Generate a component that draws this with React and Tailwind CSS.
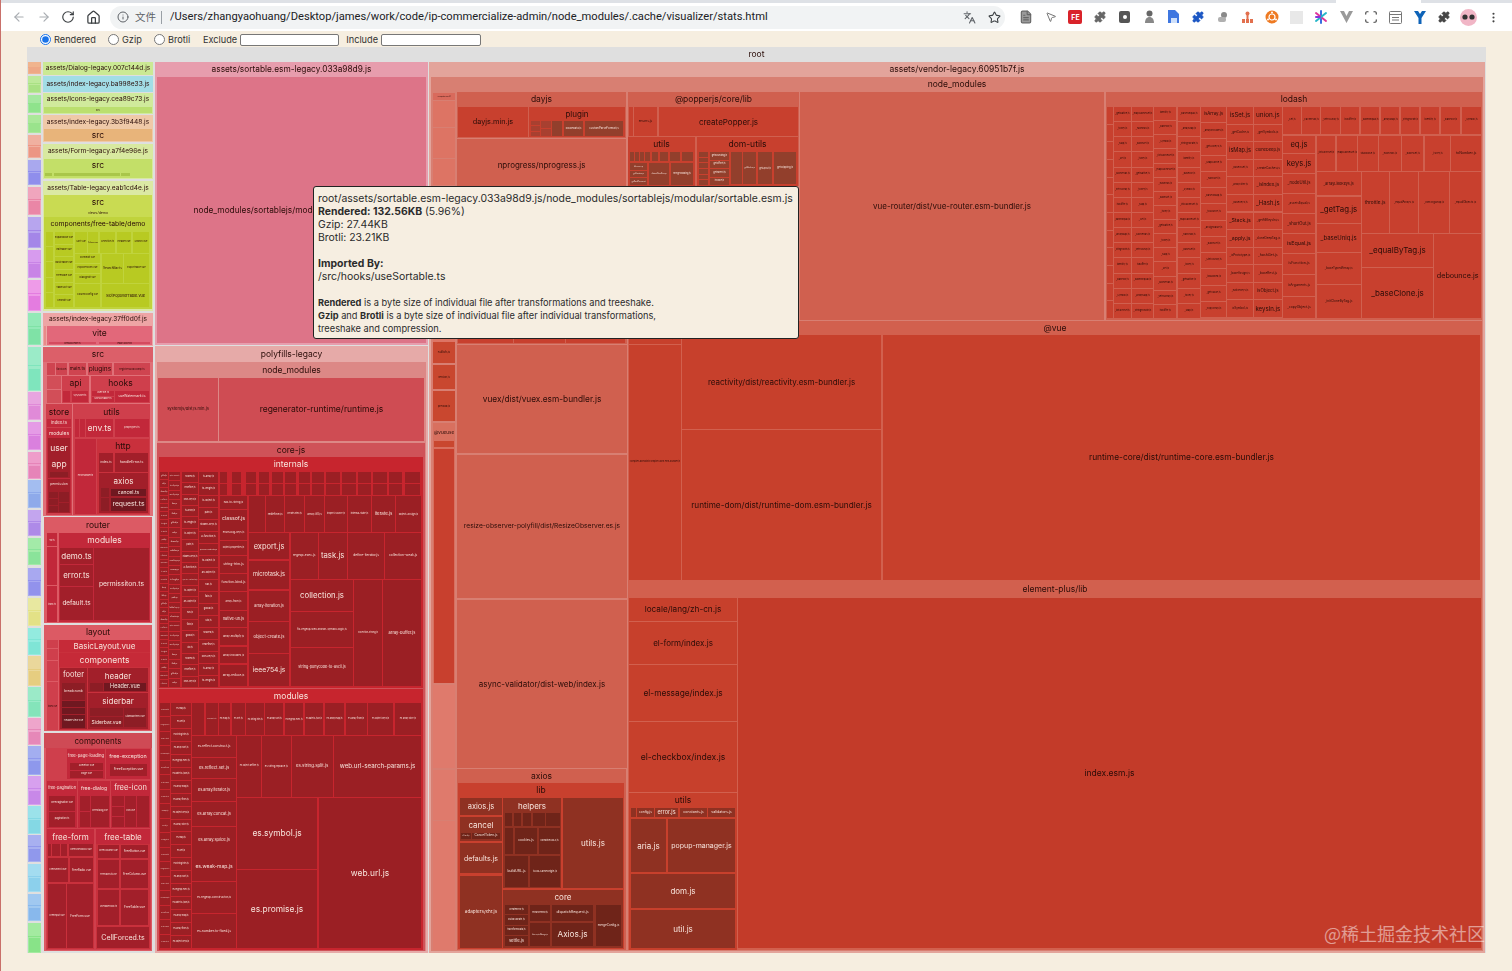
import React from "react";
import { ArrowLeft, ArrowRight, RotateCw, Home, Info, Languages, Star, Puzzle, MoreVertical, MousePointer2, Scan, FileText } from "lucide-react";

const T = [];
const n = (x0, y0, x1, y1, c, l, fs, tc) => {
  let size = fs || 8.5;
  if (l) {
    const w = x1 - x0 - 1;
    const h = y1 - y0;
    size = Math.min(size, w / (0.5 * l.length), h > 1 ? h : 1);
  }
  T.push({ x0, y0, x1, y1, c, l, fs: size, tc });
};
const LOD = ["_baseGet.js","_isKey.js","_getNative.js","_toKey.js","_Map.js","_Set.js","_cacheHas.js","_setToArray.js","isBuffer.js","_baseIsEqual.js","_arrayMap.js","_stringToPath.js","identity.js","_baseFor.js","_Symbol.js","_listCacheSet.js","_mapCacheGet.js","_hashHas.js"];
const CORE = ["to-object.js","an-object.js","has.js","fails.js","global.js","uid.js","shared.js","redefine.js","own-keys.js","is-array.js","to-length.js","is-object.js","path.js","hidden-keys.js","a-function.js","species-constructor.js"];
const ES = ["es.array.map.js","es.array.from.js","es.object.keys.js","es.array.slice.js","es.map.js","es.set.js","es.string.trim.js","es.array.sort.js","es.regexp.exec.js","es.date.to-json.js"];
let li = 0;
const cyc = (a) => a[li++ % a.length];
const col = (x0, x1, y0, y1, rows, c, names, fs) => { const h = (y1 - y0 + 1) / rows; for (let i = 0; i < rows; i++) n(x0, y0 + i * h, x1, y0 + (i + 1) * h - 1, c, names ? cyc(names) : "", fs || 3); };
const row = (y0, y1, xs, c, labels, fs) => xs.forEach(([a, b], i) => n(a, y0, b, y1, c, labels ? labels[i] : "", fs || 3));

/* root */
n(27, 47, 1486, 953, "#dfdfdf");
n(27, 47, 1486, 62, "#dfdfdf", "root", 8.5);

/* far-left chunks */
[[62,74,"#f0b48e","#eea886"],[76,93,"#bde99a","#a9e184"],[95,113,"#a5e8a0","#8fe38c"],[115,133,"#abe89a","#9ae38c"],[135,158,"#f0b0a0","#ec9684"],[160,185,"#a9a8ee","#8f8eec"],[187,215,"#f0a5bd","#ea86a6"],[217,248,"#b7a5ee","#a486e8"],[250,278,"#d79bee","#c884e6"],[280,311,"#ee9be8","#e47ce0"],[313,345,"#93e9b7","#7fe2a6"],[347,391,"#9bebc8","#7fe5bd"],[392,420,"#e8a5e0","#e08ad8"],[422,450,"#e59be6","#da80de"],[452,479,"#ee9dca","#e684b8"],[480,508,"#a3bdf0","#8eaaea"],[510,536,"#c3a5ee","#ae8ae8"],[538,565,"#a3eaa8","#8ae39a"],[568,596,"#a8a8f0","#9292ec"],[598,626,"#e8e8a0","#e3e186"],[628,655,"#93ebdf","#7fe5d6"],[656,686,"#ead79b","#e6cd80"],[687,717,"#9beac8","#84e4ba"],[718,745,"#eea5cb","#e688b8"],[746,775,"#a3aef0","#8e98ec"],[776,805,"#d7a0ee","#c888e8"],[806,834,"#9be2ea","#84d8e4"],[835,862,"#a8b0f0","#9098ec"],[864,892,"#a3dcf0","#8cd0ec"],[894,921,"#a0c8f0","#88b8ec"],[923,953,"#a3eaa0","#88e388"]].forEach(([a, b, l, d]) => {
  n(28, a, 41, b, l);
  n(28, a + (b - a) * 0.42, 41, a + (b - a) * 0.44, d);
  n(29, a + (b - a) * 0.5, 40, b - 1, d);
});

/* second column */
n(43, 62, 153, 75, "#cbe994", "assets/Dialog-legacy.007c144d.js", 6.6);
n(43, 76, 153, 92, "#a2dde6", "assets/index-legacy.ba998e33.js", 6.6);
n(43, 93, 153, 114, "#d0ea9c"); n(43, 93, 153, 106, "#d0ea9c", "assets/Icons-legacy.cea89c73.js", 6.6); n(44, 107, 152, 113, "#bbdf6e", "src", 3);
n(43, 115, 153, 142, "#efc9a8"); n(43, 115, 153, 129, "#efc9a8", "assets/index-legacy.3b3f9448.js", 6.6); n(44, 129, 152, 141, "#e8b47a", "src", 8.5);
n(43, 144, 153, 179, "#d8e9a0"); n(43, 144, 153, 158, "#d8e9a0", "assets/Form-legacy.a7f4e96e.js", 6.6); n(44, 159, 152, 178, "#c3df68"); n(44, 159, 152, 172, "#c3df68", "src", 8.5); row(173, 176, [[45,52],[54,120],[121,130]], "#a9c64a", ["", "", ""], 2.5);
n(43, 181, 153, 311, "#dbe9a4"); n(43, 181, 153, 195, "#dbe9a4", "assets/Table-legacy.eab1cd4e.js", 6.6);
n(44, 195, 152, 309, "#c9db52"); n(44, 195, 152, 210, "#c9db52", "src", 8.5); n(44, 210, 152, 217, "#c9db52", "views/demo", 3.5);
n(44, 217, 152, 309, "#c0d33c"); n(44, 217, 152, 232, "#c0d33c", "components/free-table/demo", 6.8);
const OL = "#b8ca22";
col(46, 53, 232, 307, 5, OL, [""]);
col(55, 73, 232, 307, 6, OL, ["EditTable.vue","BasicTable.vue","TreeTable.vue","TableSlot.vue","CellEdit.vue","ExpandRow.vue"], 2.4);
row(232, 253, [[75,87],[88,98],[100,115],[117,131],[133,149]], OL, ["Sort.vue","Column.vue","Selection.ts","Header.vue","Search.vue"], 2.4);
col(75, 100, 254, 283, 3, OL, ["PopoverForm.vue","DialogEdit.vue","FormEdit.vue"], 2.4);
n(75, 284, 100, 307, OL, "ColumnConfig.vue", 2.4);
n(102, 254, 123, 283, OL, "SearchBar.ts", 3.2); n(124, 254, 149, 283, OL, "ExportTable.vue", 2.4);
n(102, 284, 149, 307, OL, "SlotPopoverTable.vue", 3.8);

/* index 37ff + vite */
n(43, 313, 153, 346, "#eea5a5"); n(43, 313, 153, 326, "#eea5a5", "assets/index-legacy.37ff0d0f.js", 6.6);
n(44, 326, 46, 345, "#e88a8a"); n(47, 326, 152, 345, "#e2687a"); n(47, 326, 152, 341, "#e2687a", "vite", 8.5);
row(342, 344, [[49,96],[99,150]], "#d44b5f", ["preload-helper.js","legacy-polyfills"], 2);

/* src */
const S0 = "#dc5f69", S1 = "#cf3f4c", S2 = "#c2283a", S3 = "#a21f2a", S4 = "#8d1d25";
n(43, 347, 153, 516, "#e07078"); n(43, 347, 153, 362, S0, "src", 8.5);
n(47, 363, 55, 375, "#cf4450"); n(56, 363, 67, 375, "#cf4450", "favicon", 3); n(69, 363, 86, 375, "#cf4450", "main.ts", 5); n(88, 363, 112, 375, "#cf4450", "plugins", 7); n(114, 363, 150, 375, "#cf4450", "registerGlobComp.ts", 2.6);
n(47, 376, 61, 389, "#d24e58"); n(47, 390, 61, 403, "#d24e58");
n(62, 376, 89, 403, S1); n(62, 376, 89, 390, S1, "api", 8.5); n(63, 391, 70, 402, S2); n(72, 391, 88, 402, S2, "sys/user.ts", 2.5);
n(91, 376, 150, 403, S1); n(91, 376, 150, 390, S1, "hooks", 8.5); col(92, 114, 391, 402, 2, S2, ["useTitle.ts","useSortable.ts"], 2.5); n(115, 391, 149, 402, S2, "useWatermark.ts", 3.4);

n(46, 404, 72, 515, S1);
n(46, 405, 72, 419, S1, "store", 8.5);
n(47, 419, 71, 427, S2, "index.ts", 4.3);
n(47, 428, 71, 513, S2); n(47, 428, 71, 438, S2, "modules", 5);
n(48, 438, 70, 458, S3, "user", 8.5);
n(48, 458, 70, 478, S3); n(48, 458, 70, 471, S3, "app", 8.5); n(50, 472, 68, 477, S4);
n(48, 479, 70, 513, S3); n(48, 479, 70, 491, S3, "permission", 3.4); col(49, 58, 492, 512, 3, S4); col(59, 69, 492, 512, 2, S4);

n(73, 404, 150, 515, S1); n(73, 405, 150, 419, S1, "utils", 8.5);
row(419, 437, [[75,79],[80,85]], S2); n(86, 419, 113, 437, S2, "env.ts", 8.5); n(115, 419, 149, 437, S2, "propTypes.ts", 2.5);
n(75, 439, 96, 514, S2, "errorHandler.ts", 2.2);
n(97, 439, 149, 514, "#c9303c"); n(97, 440, 149, 453, "#c9303c", "http", 8.5);
n(99, 453, 113, 472, S3, "index.ts", 3); n(115, 453, 148, 472, S3, "handleError.ts", 3.6);
n(99, 473, 148, 513, S3); n(99, 474, 148, 487, S3, "axios", 8);
n(101, 488, 109, 497, S4); n(101, 498, 109, 511, S4);
n(111, 489, 146, 496, "#701820", "cancel.ts", 5); n(111, 498, 146, 511, "#701820", "request.ts", 7);

/* router */
n(44, 517, 152, 623, "#dc5a64"); n(44, 518, 152, 532, "#dc5a64", "router", 8.5);
n(47, 533, 57, 546, S2, "ssr.ts", 2); n(47, 547, 57, 585, S2); n(47, 586, 57, 622, S2, "index.ts", 2);
n(59, 533, 150, 622, S2); n(59, 533, 150, 547, S2, "modules", 8.5);
n(60, 548, 93, 564, S3, "demo.ts", 8); n(60, 565, 93, 586, S3, "error.ts", 7.8); n(60, 587, 93, 620, S3, "default.ts", 6.6);
n(94, 548, 149, 620, S3, "permissiton.ts", 6.8);

/* layout */
n(44, 625, 152, 731, "#dc5a64"); n(44, 625, 152, 640, "#dc5a64", "layout", 8.5);
n(47, 640, 58, 648, S1); n(47, 649, 58, 660, S1); n(47, 661, 58, 681, S1); n(47, 682, 58, 730, S1, "index.vue", 2);
n(59, 640, 150, 730, "#c9303c");
n(59, 640, 150, 652, "#c62a38", "BasicLayout.vue", 8);
n(59, 653, 150, 667, "#c62a38", "components", 8.5);
n(60, 668, 87, 729, S3); n(60, 668, 87, 682, S3, "footer", 7.5);
n(62, 683, 85, 700, S4, "breadcrumb", 3.2); n(62, 701, 85, 707, "#701820"); n(62, 708, 85, 714, "#701820"); n(62, 715, 85, 728, "#701820", "HeaderView.vue", 2.5);
n(88, 668, 148, 692, S3); n(88, 668, 148, 683, S3, "header", 8);
n(90, 683, 103, 691, S4); n(104, 683, 146, 691, "#701820", "Header.vue", 5.5);
n(88, 693, 148, 729, S3); n(88, 693, 148, 708, S3, "siderbar", 8);
n(90, 708, 123, 716, S4); n(90, 717, 123, 727, S4, "Siderbar.vue", 5); n(124, 708, 146, 727, S4, "SidebarItem.vue", 2.5);

/* components */
n(44, 733, 152, 951, "#dc5a64"); n(44, 733, 152, 748, "#cf4a55", "components", 8);
n(46, 748, 151, 950, S1);
n(47, 749, 53, 779, S1); n(54, 749, 65, 779, S1);
n(67, 749, 105, 779, S2); n(67, 750, 105, 762, S2, "free-page-loading", 4.2); col(70, 103, 763, 778, 2, S3, ["Skeleton.vue","Page.vue"], 2.5);
n(106, 749, 150, 779, S2); n(106, 750, 150, 763, S2, "free-exception", 5.4); n(110, 764, 147, 776, S3, "FreeException.vue", 3.4);
n(47, 781, 77, 828, S2); n(47, 781, 77, 795, S2, "free-pagination", 3.8); col(49, 75, 796, 827, 2, S3, ["FreePagination.vue","pagination.ts"], 2.4);
n(78, 781, 110, 828, S2); n(78, 781, 110, 795, S2, "free-dialog", 5); n(80, 796, 90, 811, S3); n(80, 812, 90, 827, S3); n(91, 796, 109, 827, S3, "FreeDialog.vue", 2.2);
n(111, 781, 150, 828, S2); n(111, 781, 150, 795, S2, "free-icon", 7.5); col(112, 124, 796, 827, 3, S3); n(125, 796, 136, 827, S3, "Icon.vue", 2.2); n(137, 796, 149, 827, S3);
n(47, 829, 94, 949, "#c9303c"); n(47, 829, 94, 844, S2, "free-form", 8);
row(844, 856, [[48,51],[52,60],[61,67]], S3); n(69, 844, 93, 856, S3, "FreeCheckbox.vue", 2.4);
n(48, 858, 68, 882, S3, "FreeSelect.vue", 2.4); n(70, 858, 93, 882, S3, "FreeRadio.vue", 2.8);
n(48, 884, 66, 948, S3, "FreeInput.vue", 2.3); n(67, 884, 93, 948, S3, "FreeForm.vue", 3);
n(96, 829, 150, 949, "#c9303c"); n(96, 829, 150, 844, S2, "free-table", 8);
n(98, 845, 119, 858, S3, "FreeColumn.vue", 2.4); n(121, 845, 148, 858, S3, "FreeButton.vue", 3);
n(98, 860, 119, 888, S3, "FreeTableUtil.vue", 2); n(121, 860, 148, 888, S3, "FreeColumn.vue", 3);
n(98, 890, 119, 925, S3, "useTableHook.ts", 2.2); n(121, 890, 148, 925, S3, "FreeTable.vue", 3.2);
n(97, 927, 149, 948, S3, "CellForced.ts", 7);

/* sortable */
n(155, 62, 428, 345, "#e79dad"); n(155, 62, 428, 77, "#e79dad", "assets/sortable.esm-legacy.033a98d9.js", 8.3);
n(157, 77, 426, 343, "#dd7488", "node_modules/sortablejs/modular/sortable.esm.js", 8.3);

/* polyfills */
n(155, 346, 428, 953, "#e6aaa8"); n(155, 346, 428, 362, "#e6aaa8", "polyfills-legacy", 8.5);
n(157, 362, 426, 951, "#dc8886"); n(157, 362, 426, 378, "#dc8886", "node_modules", 8.5);
n(158, 378, 218, 441, "#cf4c53", "systemjs/dist/s.min.js", 4.1);
n(219, 378, 424, 441, "#cf4c53", "regenerator-runtime/runtime.js", 8.5);
n(157, 443, 425, 951, "#cf5258"); n(157, 443, 425, 457, "#cf5258", "core-js", 8.5);
const R0 = "#c7252e", R1 = "#9b1f24";
n(159, 457, 423, 688, R0); n(159, 457, 423, 472, R0, "internals", 8.5);
const px = (o, s) => o + s / 3;
col(160, 168, 472, 687, 27, R1, CORE, 1.5);
col(169, 180, 472, 687, 23, R1, CORE, 1.8);
col(182, 198, 472, 687, 19, R1, CORE, 2.2);
col(199, 218, 472, 687, 18, R1, CORE, 2.4);
[[195,220],[232,262],[273,305],[312,344],[350,387],[391,427],[431,467],[471,510],[514,557],[561,605],[609,650],[654,698],[702,745],[750,798]].forEach(([a,b],i)=>{ n(px(155,a),472,px(155,b)-1,483,R1); n(px(155,a),484,px(155,b)-1,495,R1); });
[[168,208,"has-to-string.js",2.7],[210,260,"classof.js",5.6],[262,300,"enum-bug-keys.js",2.5],[303,345,"object-properties.js",2.3],[348,400,"string-trim.js",3.4],[402,452,"function-bind.js",3.2],[455,510,"array-from.js",2.6],[512,560,"native-url.js",3.8],[565,615,"array-multiply.js",2.8],[620,670,"array-includes.js",2.7],[675,738,"array-reduce.js",3]].forEach(([a,b,l,f])=>n(220,px(440,a),247,px(440,b),R1,l,f));
[[282,330,"",2.5],[333,388,"redefine.js",3],[391,446,"create-html.js",2.2],[449,508,"array-fill.js",2.9],[511,575,"inspect-source.js",2.2],[579,648,"internal-state.js",2.4],[651,720,"iterate.js",4.8],[723,798,"object-assign.js",2.6]].forEach(([a,b,l,f])=>n(px(155,a),496,px(155,b),532,R1,l,f));
[[280,358,"export.js",7.5],[362,448,"microtask.js",5.6],[452,542,"array-iteration.js",3.8],[546,638,"object-create.js",4.2],[642,738,"ieee754.js",6.8]].forEach(([a,b,l,f])=>n(249,px(440,a),289,px(440,b),R1,l,f));
[[407,488,"regexp-exec.js",3.2],[491,575,"task.js",7.8],[579,688,"define-iterator.js",3.3],[691,798,"collection-weak.js",3.3]].forEach(([a,b,l,f])=>n(px(155,a),533,px(155,b),579,R1,l,f));
n(291,580,353,611,R1,"collection.js",7.8); n(291,612,353,647,R1,"fix-regexp-well-known-symbol-logic.js",2.7); n(291,648,353,686,R1,"string-punycode-to-ascii.js",3.7);
n(354,580,382,686,R1,"collection-strong.js",2.2); n(383,580,421,686,R1,"array-buffer.js",4);

n(159, 689, 423, 950, R0); n(159, 689, 423, 703, R0, "modules", 8.5);
col(160, 170, 703, 948, 17, R1, ES, 1.4);
col(171, 191, 703, 948, 19, R1, ES, 2.1);
[[112,148],[152,188],[192,226],[230,270],[273,328],[331,385],[389,445],[449,505],[509,568],[572,635],[639,715],[719,798]].forEach(([a,b],i)=>n(px(155,a),703,px(155,b),735,R1,i<1?"":cyc(ES),2.2));
[[138,200,"es.reflect.construct.js",3.2],[203,265,"es.reflect.set.js",4.2],[268,332,"es.array.iterator.js",3.8],[335,408,"es.array.concat.js",4],[410,488,"es.array.splice.js",4],[490,572,"es.weak-map.js",5],[575,670,"es.regexp.constructor.js",3],[673,775,"es.number.to-fixed.js",3.4]].forEach(([a,b,l,f])=>n(192,px(690,a),236,px(690,b),R1,l,f));
[[247,318,"es.object.define.js",2.2],[321,407,"es.string.replace.js",2.6],[410,533,"es.string.split.js",4.4],[537,798,"web.url-search-params.js",6.2]].forEach(([a,b,l,f])=>n(px(155,a),736,px(155,b),797,R1,l,f));
n(237,798,317,869,R1,"es.symbol.js",8.4); n(237,870,317,948,R1,"es.promise.js",8.4); n(319,798,421,948,R1,"web.url.js",8.4);

/* vendor */
n(429, 62, 1485, 953, "#e3a49b"); n(429, 62, 1485, 77, "#e3a49b", "assets/vendor-legacy.60951b7f.js", 8.5);
n(431, 77, 1483, 951, "#d87f72"); n(431, 77, 1483, 92, "#d87f72", "node_modules", 8.5);
const L0 = "#df7a6c", L1 = "#d0604f", L2 = "#c8402e", L3 = "#923f2c", L4 = "#6f2419";
n(433, 93, 455, 100, "#d96a5c", "compute-scroll", 1.8);
[[101,127],[128,158],[159,185]].forEach(([a,b])=>n(433,a,455,b,"#dd7464"));
n(433, 186, 455, 344, "#dd7464");
n(433, 342, 455, 363, "#c9472f", "nullish.js", 3);
n(433, 365, 455, 389, "#c9472f", "version.js", 2.6);
n(433, 391, 455, 421, "#c9472f", "preload.js", 2.6);
n(433, 423, 455, 683, "#d8705f"); n(433, 426, 455, 440, "#d8705f", "@vueuse", 4.6); n(434, 441, 454, 447, "#c9472f"); n(434, 449, 454, 683, L2);
n(433, 685, 455, 768, L0); n(433, 770, 455, 820, L0); n(433, 821, 455, 950, L0);

n(457, 92, 626, 138, L1); n(457, 92, 626, 107, L1, "dayjs", 8.5);
n(458, 107, 528, 137, L2, "dayjs.min.js", 7.3);
n(529, 107, 625, 137, L2); n(529, 108, 625, 120, L2, "plugin", 8);
col(531, 540, 121, 136, 3, "#a84030"); col(541, 551, 121, 136, 2, "#a84030");
n(552, 121, 562, 136, L3); n(564, 121, 583, 136, L3, "localeData.js", 2.6); n(585, 121, 623, 136, L3, "customParseFormat.js", 2.8);
n(457, 139, 626, 191, L1, "nprogress/nprogress.js", 8);
n(457, 192, 627, 344, L1);
row(325, 343, [[458,513],[514,565],[566,625]], L2);
n(457, 345, 627, 453, L1, "vuex/dist/vuex.esm-bundler.js", 8.3);
n(457, 455, 627, 598, L1, "resize-observer-polyfill/dist/ResizeObserver.es.js", 6.7);
n(457, 600, 627, 768, L1, "async-validator/dist-web/index.js", 8);

n(457, 769, 626, 950, L1); n(457, 769, 626, 783, L1, "axios", 8.5);
n(458, 783, 624, 949, L2); n(458, 783, 624, 798, L2, "lib", 8.5);
const A = "#8f3122";
n(460, 798, 502, 815, A, "axios.js", 7.5);
n(460, 817, 502, 841, A); n(460, 817, 502, 833, A, "cancel", 8); n(461, 833, 471, 839, L4, "isCancel.js", 1.4); n(472, 833, 500, 839, L4, "CancelToken.js", 3.2);
n(460, 843, 502, 873, A, "defaults.js", 7);
n(460, 876, 502, 948, A, "adapters/xhr.js", 4.6);
n(503, 798, 561, 888, A); n(503, 799, 561, 812, A, "helpers", 8);
[[505,512],[514,521],[523,531],[533,545],[546,560]].forEach(([a,b])=>n(a,813,b,826,L4));
n(505, 828, 513, 854, L4); n(515, 828, 537, 854, L4, "cookies.js", 3.3); n(539, 828, 560, 854, L4, "combineURLs.js", 2.4);
n(505, 856, 528, 887, L4, "buildURL.js", 3.4); n(530, 856, 560, 887, L4, "isURLSameOrigin.js", 2.6);
n(563, 798, 623, 888, A, "utils.js", 8);
n(503, 890, 623, 948, A); n(503, 890, 623, 904, A, "core", 8);
col(505, 528, 905, 935, 3, L4, ["transformData.js","createError.js","buildFullPath.js"], 2.3); n(505, 936, 528, 946, L4, "settle.js", 4.2);
n(530, 905, 550, 921, L4, "enhanceError.js", 2.1); n(530, 923, 550, 946, L4, "InterceptorManager.js", 1.5);
n(552, 905, 593, 921, L4, "dispatchRequest.js", 3.6); n(552, 923, 593, 946, L4, "Axios.js", 8.2);
n(596, 905, 621, 946, L4, "mergeConfig.js", 3);

n(628, 92, 799, 186, L1); n(628, 92, 799, 107, L1, "@popperjs/core/lib", 8.5);
n(629, 107, 633, 136, L2); n(634, 107, 657, 136, L2, "enums.js", 3.2); n(659, 107, 798, 136, L2, "createPopper.js", 8);
n(628, 137, 695, 186, L2); n(628, 138, 695, 151, L2, "utils", 8.5);
[[630,634],[635,639],[640,644],[645,650],[652,658],[660,668],[670,680],[682,693]].forEach(([a,b])=>n(a,152,b,161,L3));
col(630, 647, 163, 185, 3, L3, ["getBasePlacement","debounce.js","getVariation.js"], 1.6); n(649, 163, 669, 185, L3, "detectOverflow.js", 1.8); n(671, 163, 693, 185, L3, "mergePadding.js", 2.2);
n(697, 137, 798, 186, L2); n(697, 138, 798, 151, L2, "dom-utils", 8.5);
col(699, 708, 152, 185, 6, L3); col(710, 729, 152, 185, 4, L3, ["getBounding.js","getOffset.js","getParent.js","isTable.js"], 2.2);
n(731, 152, 742, 184, L3); n(743, 152, 756, 184, L3, "getWindow.js", 1.7); n(758, 152, 772, 184, L3, "getLayout.js", 2); n(774, 152, 796, 184, L3, "getClipping.js", 2.5);

n(800, 92, 1104, 320, L1, "vue-router/dist/vue-router.esm-bundler.js", 8);

/* lodash */
n(1106, 92, 1482, 320, L1); n(1106, 92, 1482, 107, L1, "lodash", 8.5);
const D = "#c8402e", q = (v) => 1100 + v / 3, qy = (v) => 90 + v / 3;
col(q(22), q(38), 107, 318, 12, D);
[[42,92,14],[95,160,14],[163,229,15],[233,300,14]].forEach(([a,b,r])=>col(q(a),q(b),107,318,r,D,LOD,2.4));
const lodCol = (a, b, labels) => labels.forEach((l, i) => { const h = 211 / labels.length; const big = l[1]; n(q(a), 107 + i * h, q(b), 107 + (i + 1) * h - 1, D, l[0], big || 2.5); });
lodCol(303, 378, [["isArray.js",4.4],["_arrayIncludes.js"],["_getAllKeys.js"],["_MapCache.js"],["_hashSet.js"],["_baseIsMap.js"],["_toSource.js"],["_assignValue.js"],["_baseGet.js"],["_Uint8Array.js"],["_isMasked.js"],["_getValue.js"],["_copyArray.js"]]);
lodCol(382, 458, [["isSet.js",6],["_getCache.js",3],["isMap.js",5.6],["_baseIsSet.js"],["_arrayFilter.js"],["_baseKeys.js"],["_Stack.js",5.2],["_apply.js",5.2],["_isPrototype.js",3],["_baseAssign.js",2.8],["_nativeKeys.js"],["isSymbol.js",3]]);
lodCol(461, 546, [["union.js",6.4],["_getSymbols.js",3],["cloneDeep.js",4],["_createCaches.js",3],["_isIndex.js",4.6],["_Hash.js",6],["_getAllKeysIn.js",3],["_cloneDeepTag.js",3],["_hashGet.js",3.6],["_baseRest.js",3.2],["isObject.js",4.4],["keysIn.js",6.2]]);
[[549,602],[606,660],[664,720],[724,778],[783,838],[843,898],[903,958],[963,1018],[1023,1080],[1085,1143]].forEach(([a,b],i)=>n(q(a),qy(50),q(b),qy(133),D,cyc(LOD),2.5));
[[650,706],[710,770],[773,833],[837,902],[906,970],[975,1050],[1054,1143]].forEach(([a,b],i)=>n(q(a),qy(138),q(b),qy(243),D,i==2?"stubFalse.js":i==6?"toNumber.js":cyc(LOD),i==6?3.6:2.6));
[[138,190,"eq.js",7.6],[193,250,"keys.js",7.6],[253,308,"_nodeUtil.js",4.2],[311,370,"_assetsEqual.js",3],[373,430,"_shortOut.js",4.2],[433,490,"isEqual.js",5.4],[493,552,"isFunction.js",3.6],[555,618,"isArguments.js",3.2],[621,684,"_copyObject.js",3.4]].forEach(([a,b,l,f])=>n(q(549),qy(a),q(645),qy(b),D,l,f));
[[246,316,"_arrayLikeKeys.js",3.7],[320,400,"_getTag.js",7.8],[403,486,"_baseUniq.js",6],[490,582,"_baseTypedArray.js",3],[586,684,"_initCloneByTag.js",3.2]].forEach(([a,b,l,f])=>n(q(650),qy(a),q(782),qy(b),D,l,f));
[[785,866,"throttle.js",5],[870,954,"_equalArrays.js",2.8],[958,1046,"_overArgWrap.js",2.6],[1050,1143,"_equalObjects.js",2.8]].forEach(([a,b,l,f])=>n(q(a),qy(246),q(b),qy(428),D,l,f));
n(q(785),qy(431),q(1000),qy(530),D,"_equalByTag.js",8);
n(q(785),qy(534),q(1000),qy(684),D,"_baseClone.js",8);
n(q(1003),qy(431),q(1143),qy(684),D,"debounce.js",7.2);

/* @vue */
const V = "#c7402c";
n(628, 321, 1482, 582, "#d2604e"); n(628, 321, 1482, 335, "#d2604e", "@vue", 8.5);
n(629, 335, 681, 344, V, "shared/dist/shared.esm-bundler.js", 2.4);
n(629, 345, 681, 580, V, "compiler-dom/dist/compiler-dom.esm-bundler.js", 2.2);
n(682, 335, 881, 429, V, "reactivity/dist/reactivity.esm-bundler.js", 8);
n(682, 430, 881, 580, V, "runtime-dom/dist/runtime-dom.esm-bundler.js", 8.2);
n(883, 335, 1480, 580, V, "runtime-core/dist/runtime-core.esm-bundler.js", 8.4);

/* element-plus */
n(628, 582, 1482, 950, "#d2604e"); n(628, 582, 1482, 597, "#d2604e", "element-plus/lib", 8.5);
n(629, 598, 737, 621, V, "locale/lang/zh-cn.js", 8.2);
n(629, 622, 737, 664, V, "el-form/index.js", 8);
n(629, 665, 737, 721, V, "el-message/index.js", 8.3);
n(629, 722, 737, 792, V, "el-checkbox/index.js", 8.6);
n(629, 793, 737, 950, V); n(629, 794, 737, 807, V, "utils", 8.5);
const E = "#8f3122";
n(631, 808, 636, 817, E); n(637, 808, 654, 817, E, "config.js", 3.2); n(655, 808, 678, 817, E, "error.js", 6.4); n(680, 808, 707, 817, E, "constants.js", 3.6); n(708, 808, 735, 817, E, "validators.js", 3.6);
n(631, 819, 666, 872, E, "aria.js", 8); n(668, 819, 735, 872, E, "popup-manager.js", 7);
n(631, 874, 735, 908, E, "dom.js", 8); n(631, 910, 735, 948, E, "util.js", 8);
n(738, 598, 1481, 948, "#c33b29", "index.esm.js", 8.5);

const lum = (h) => { const v = parseInt(h.slice(1), 16); return 0.299 * (v >> 16) + 0.587 * ((v >> 8) & 255) + 0.114 * (v & 255); };

function Tile({ t }) {
  const dark = lum(t.c) < 95;
  return (
    <div
      className="absolute flex items-center justify-center overflow-hidden whitespace-nowrap leading-none"
      style={{ left: t.x0, top: t.y0 - 47, width: t.x1 - t.x0, height: t.y1 - t.y0, background: t.c, fontSize: t.fs, color: dark ? "#f8e4dc" : "#2a0c08" }}
    >
      {t.l}
    </div>
  );
}

function Ext({ children }) {
  return <div className="flex h-4 w-[24.6px] shrink-0 items-center justify-center">{children}</div>;
}

function Toolbar() {
  return (
    <div className="h-[31px] shrink-0 bg-white">
      <div className="flex h-[3px] bg-[#dee1e6]">
        <div className="ml-[1335px] h-[3px] w-[85px] bg-white" />
      </div>
      <div className="flex h-[28px] items-center font-['Inter',sans-serif]">
        <div className="ml-[11px] flex w-[98px] items-center gap-[10.5px]">
          <ArrowLeft size={14} className="text-[#a9adb2]" />
          <ArrowRight size={14} className="text-[#a9adb2]" />
          <RotateCw size={14} className="text-[#3c4043]" />
          <Home size={15} className="text-[#3c4043]" />
        </div>
        <div className="flex h-[23px] w-[895px] items-center rounded-full bg-[#f1f3f4] pl-[7px]">
          <Info size={12} className="text-[#5f6368]" />
          <span className="ml-[6px] font-['Noto_Sans_CJK_SC',sans-serif] text-[10.5px] text-[#5f6368]">文件</span>
          <span className="ml-[5px] h-[13px] w-px bg-[#9aa0a6]" />
          <span className="ml-[8px] font-['Roboto',sans-serif] text-[11.15px] text-[#202124]">/Users/zhangyaohuang/Desktop/james/work/code/ip-commercialize-admin/node_modules/.cache/visualizer/stats.html</span>
          <Languages size={13} className="ml-auto mr-[12px] text-[#5f6368]" />
          <Star size={13} className="mr-[4px] text-[#3c4043]" />
        </div>
        <div className="ml-[9px] flex items-center">
          <Ext><FileText size={14} className="fill-[#9a9a9a] text-[#666]" /></Ext>
          <Ext><MousePointer2 size={12} className="text-[#777]" /></Ext>
          <Ext><span className="flex h-[14px] w-[14px] items-center justify-center rounded-[2px] bg-[#d9232a] text-[7px] font-bold leading-none text-white">FE</span></Ext>
          <Ext><Puzzle size={12} className="fill-[#666] text-[#666]" /></Ext>
          <Ext><span className="flex h-[12px] w-[11px] items-center justify-center rounded-[2px] bg-[#555]"><span className="h-[4px] w-[4px] rounded-full bg-white" /></span></Ext>
          <Ext>
            <svg width="11" height="14" viewBox="0 0 11 14"><circle cx="5.5" cy="3.5" r="3" fill="#666" /><path d="M1 13c0-4 2-6 4.5-6S10 9 10 13z" fill="#888" /></svg>
          </Ext>
          <Ext>
            <svg width="13" height="14" viewBox="0 0 13 14"><path d="M1 0h7l4 4v9H1z" fill="#3f77e0" /><path d="M4 8h6v5H4z" fill="#cfe0fa" /></svg>
          </Ext>
          <Ext><Puzzle size={12} className="fill-[#1a56c4] text-[#1a56c4]" /></Ext>
          <Ext>
            <svg width="12" height="12" viewBox="0 0 12 12"><circle cx="7" cy="4" r="3" fill="#8a8a8a" /><rect x="1" y="6" width="8" height="5" rx="2" fill="#b0b0b0" /></svg>
          </Ext>
          <Ext>
            <svg width="13" height="13" viewBox="0 0 13 13" fill="#e2704e"><circle cx="6.5" cy="2.5" r="2" /><rect x="5.5" y="4" width="2" height="4" /><rect x="1" y="8" width="3" height="4" /><rect x="5" y="8" width="3" height="4" /><rect x="9" y="8" width="3" height="4" /></svg>
          </Ext>
          <Ext>
            <svg width="14" height="14" viewBox="0 0 14 14"><circle cx="7" cy="7" r="6.5" fill="#ee7a22" /><circle cx="7" cy="7" r="3" fill="none" stroke="#fff" strokeWidth="1.2" /><circle cx="7" cy="2.5" r="1" fill="#fff" /><circle cx="3" cy="9.5" r="1" fill="#fff" /><circle cx="11" cy="9.5" r="1" fill="#fff" /></svg>
          </Ext>
          <Ext><span className="h-[13px] w-[13px] bg-[#e8e8e8]" /></Ext>
          <Ext>
            <svg width="14" height="14" viewBox="0 0 14 14" strokeWidth="2" strokeLinecap="round"><path d="M7 1v12" stroke="#3b6fe0" /><path d="M2 3l10 8" stroke="#e0359a" /><path d="M12 3L2 11" stroke="#26b6c9" /><path d="M2 7h4" stroke="#8a35d8" /></svg>
          </Ext>
          <Ext>
            <svg width="13" height="12" viewBox="0 0 13 12"><path d="M0 0h4l2.5 5L9 0h4L6.5 12z" fill="#9a9a9a" /></svg>
          </Ext>
          <Ext><Scan size={14} className="text-[#444]" /></Ext>
          <Ext>
            <svg width="13" height="13" viewBox="0 0 13 13" fill="none" stroke="#777"><rect x="0.5" y="0.5" width="12" height="12" rx="1" /><path d="M1 3.5h11M3 6.5h7M3 9h7" /></svg>
          </Ext>
          <Ext>
            <svg width="12" height="13" viewBox="0 0 12 13"><path d="M0 0h4l2 3 2-3h4L7.5 7v6h-3V7z" fill="#0e63b8" /></svg>
          </Ext>
          <Ext><Puzzle size={12} className="fill-[#444] text-[#444]" /></Ext>
          <Ext>
            <span className="flex h-[17px] w-[17px] items-center justify-center rounded-full bg-[#f1b6c6]">
              <svg width="13" height="6" viewBox="0 0 13 6"><circle cx="3" cy="3" r="2.6" fill="#333" /><circle cx="10" cy="3" r="2.6" fill="#333" /></svg>
            </span>
          </Ext>
          <Ext><MoreVertical size={13} className="text-[#444]" /></Ext>
        </div>
      </div>
    </div>
  );
}

function Radio({ label, checked, w }) {
  return (
    <label className={`flex items-center ${w}`}>
      <input type="radio" name="size" defaultChecked={checked} className="m-0 h-[11px] w-[11px] accent-[#1a73e8]" />
      <span className="ml-[3px]">{label}</span>
    </label>
  );
}

function Controls() {
  return (
    <div className="flex h-[16px] shrink-0 items-center pl-[39px] pt-px font-['Inter',sans-serif] text-[9.2px] text-[#333]">
      <Radio label="Rendered" checked w="w-[68px]" />
      <Radio label="Gzip" w="w-[46px]" />
      <Radio label="Brotli" w="w-[49px]" />
      <span>Exclude</span>
      <input className="ml-[3px] h-[12px] w-[99px] rounded-[2px] border border-[#777] bg-white" />
      <span className="ml-[7px]">Include</span>
      <input className="ml-[3px] h-[12px] w-[100px] rounded-[2px] border border-[#777] bg-white" />
    </div>
  );
}

function TooltipBox() {
  return (
    <div className="absolute left-[313px] top-[139px] h-[153px] w-[486px] rounded-[3px] border border-[#222] bg-[#f6eee1] px-[4px] pt-[5px] text-[10.45px] leading-[13px] text-[#2b2b2b]">
      <div className="whitespace-nowrap">root/assets/sortable.esm-legacy.033a98d9.js/node_modules/sortablejs/modular/sortable.esm.js</div>
      <div><b>Rendered: 132.56KB</b> (5.96%)</div>
      <div>Gzip: 27.44KB</div>
      <div>Brotli: 23.21KB</div>
      <div className="mt-[13px] font-bold">Imported By:</div>
      <div>/src/hooks/useSortable.ts</div>
      <div className="mt-[13px] text-[9.25px]">
        <div><b>Rendered</b> is a byte size of individual file after transformations and treeshake.</div>
        <div><b>Gzip</b> and <b>Brotli</b> is a byte size of individual file after individual transformations,</div>
        <div>treeshake and compression.</div>
      </div>
    </div>
  );
}

export default function App() {
  return (
    <div className="flex h-[971px] w-[1512px] flex-col overflow-hidden border-l border-l-[#c9706a] bg-[#f6eee0] font-['Inter',sans-serif]">
      <Toolbar />
      <Controls />
      <div className="relative -ml-px flex-1">
        <div className="absolute inset-0 blur-[0.35px]">
          {T.map((t, i) => <Tile key={i} t={t} />)}
        </div>
        <TooltipBox />
        <div className="absolute left-[1324px] top-[873px] font-['Noto_Sans_CJK_SC',sans-serif] text-[18px] leading-[26px] text-white/50">@稀土掘金技术社区</div>
      </div>
    </div>
  );
}
